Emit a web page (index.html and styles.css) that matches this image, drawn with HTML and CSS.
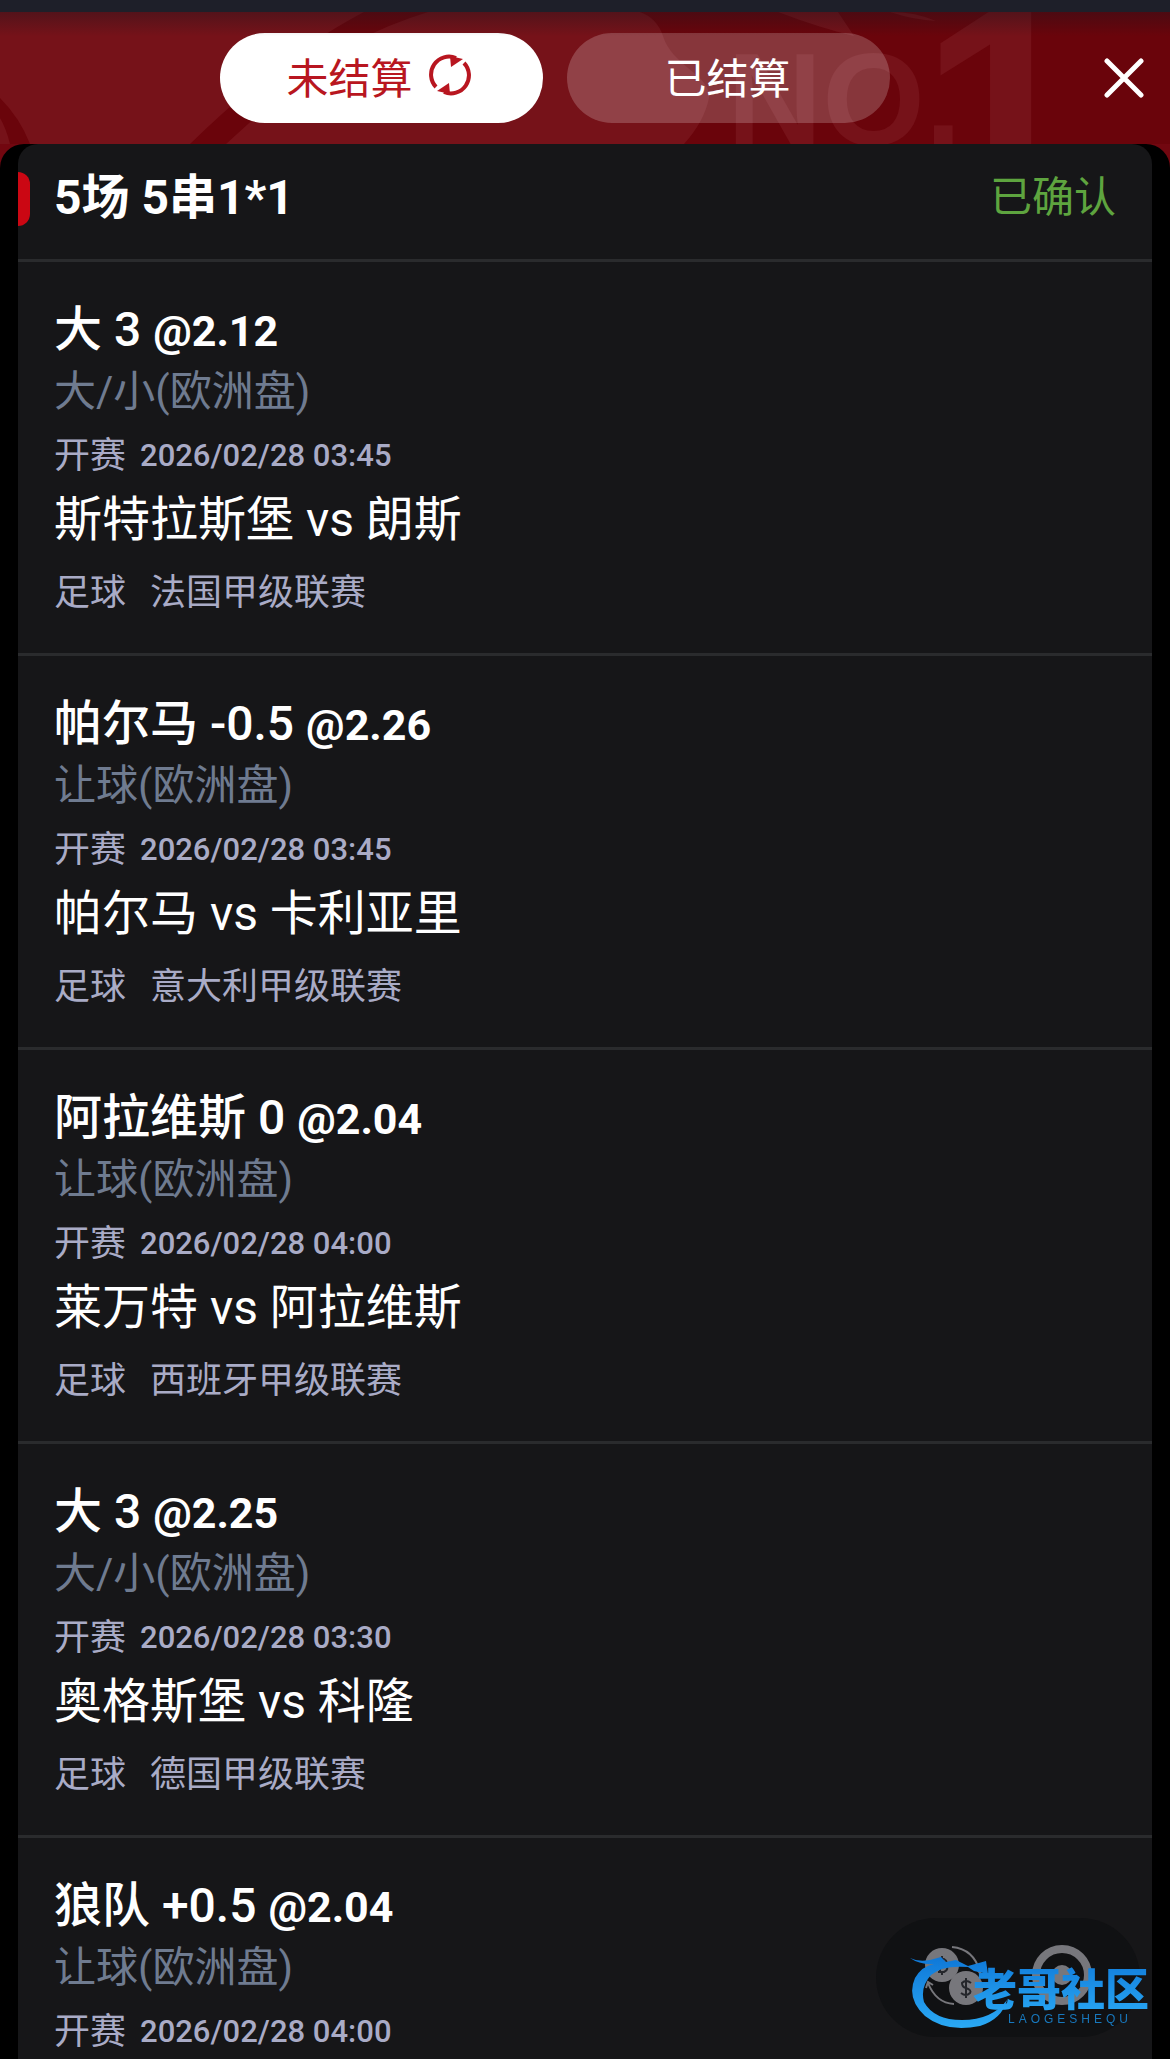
FILE: index.html
```html
<!DOCTYPE html>
<html lang="zh-CN">
<head>
  <meta charset="UTF-8">
  <meta name="viewport" content="width=device-width, initial-scale=1">
  <title>注单</title>
  <link rel="stylesheet" href="styles.css">
</head>
<body>
  <div class="status-strip"></div>

  <header class="header">
    <svg class="header-art" viewBox="0 0 1170 132" preserveAspectRatio="xMidYMin slice" aria-hidden="true">
      <path class="art-light" d="M0 0H640Q657 6 663 24C672 54 712 64 709 86Q704 110 684 132H0Z"/>
      <path class="art-light" d="M778 0H838L854 24Q820 16 778 0ZM890 0Q916 0 936 9Q914 8 890 0Z"/>
      <path class="art-dark" d="M364 0H428Q350 24 292 72L226 132H190Q280 44 364 0ZM0 86Q20 106 30 132H10Q6 116 0 106Z"/>
      <text class="art-text" x="727" y="133" font-size="132">NO.</text>
      <text class="art-text" x="920" y="204" font-size="300">1</text>
    </svg>
    <div class="tabs">
      <button type="button" class="tab active">
        未结算
        <svg class="refresh" viewBox="0 0 42 42" aria-hidden="true">
          <path d="M7 33A18 18 0 0 1 27 4M35 9A18 18 0 0 1 15 38" fill="none" stroke="currentColor" stroke-width="4"/>
          <path d="M21 2L34 5L22 13ZM21 40L8 37L20 29Z" fill="currentColor"/>
        </svg>
      </button>
      <button type="button" class="tab">已结算</button>
    </div>
    <button type="button" class="close" aria-label="关闭">
      <svg viewBox="0 0 40 40"><path d="M3 3L37 37M37 3L3 37"/></svg>
    </button>
  </header>

  <main class="panel">
    <section class="ticket">
      <div class="ticket-head">
        <h1>5场 5串1*1</h1>
        <span class="status">已确认</span>
      </div>

      <article class="bet">
        <h2>大 3 <span class="odds">@2.12</span></h2>
        <p class="market">大/小(欧洲盘)</p>
        <p class="time">开赛 <time>2026/02/28 03:45</time></p>
        <p class="match">斯特拉斯堡 vs 朗斯</p>
        <p class="league"><span>足球</span><span>法国甲级联赛</span></p>
      </article>

      <article class="bet">
        <h2>帕尔马 -0.5 <span class="odds">@2.26</span></h2>
        <p class="market">让球(欧洲盘)</p>
        <p class="time">开赛 <time>2026/02/28 03:45</time></p>
        <p class="match">帕尔马 vs 卡利亚里</p>
        <p class="league"><span>足球</span><span>意大利甲级联赛</span></p>
      </article>

      <article class="bet">
        <h2>阿拉维斯 0 <span class="odds">@2.04</span></h2>
        <p class="market">让球(欧洲盘)</p>
        <p class="time">开赛 <time>2026/02/28 04:00</time></p>
        <p class="match">莱万特 vs 阿拉维斯</p>
        <p class="league"><span>足球</span><span>西班牙甲级联赛</span></p>
      </article>

      <article class="bet">
        <h2>大 3 <span class="odds">@2.25</span></h2>
        <p class="market">大/小(欧洲盘)</p>
        <p class="time">开赛 <time>2026/02/28 03:30</time></p>
        <p class="match">奥格斯堡 vs 科隆</p>
        <p class="league"><span>足球</span><span>德国甲级联赛</span></p>
      </article>

      <article class="bet">
        <h2>狼队 +0.5 <span class="odds">@2.04</span></h2>
        <p class="market">让球(欧洲盘)</p>
        <p class="time">开赛 <time>2026/02/28 04:00</time></p>
      </article>
    </section>
  </main>

  <div class="float-bar">
    <button type="button" aria-label="兑换">
      <svg viewBox="0 0 60 60">
        <circle cx="18" cy="20" r="17"/>
        <circle cx="42" cy="43" r="17"/>
        <path class="line" d="M28 2Q50 4 56 27M50 21L56 28L59 19M4 38Q12 58 30 59M2 43L4 37L9 40"/>
        <path class="mark" d="M14 14H20Q25 17 20 20H15M15 20H21Q26 24 20 27H14M16 14V27M18 11V14M18 27V30"/>
        <path class="mark" d="M47 38Q42 34 38 38Q38 42 42 43Q48 45 46 48Q42 52 37 48M42 33V53"/>
      </svg>
    </button>
    <button type="button" aria-label="主页">
      <svg viewBox="0 0 60 60">
        <circle class="ring" cx="30" cy="30" r="26"/>
        <circle cx="30" cy="30" r="10"/>
      </svg>
    </button>
  </div>

  <div class="watermark">
    <svg viewBox="0 0 242 78" role="img" aria-label="老哥社区 LAOGESHEQU">
      <defs>
        <linearGradient id="wm" x1="0" y1="0" x2="0" y2="1">
          <stop offset="0" stop-color="#0f78d8"/>
          <stop offset="1" stop-color="#2aa9f4"/>
        </linearGradient>
      </defs>
      <path fill="url(#wm)" d="M0 5Q8 9 20 7L31 4L36 9L46 7L58 13L76 8L78 21L64 18L58 14Q32 12 21 22Q10 34 14 49Q24 67 52 67Q82 67 97 47Q92 66 70 73Q36 80 15 63Q-4 45 5 25Q12 13 24 11Q10 12 0 5Z"/>
      <text class="wm-name" x="63" y="53" fill="url(#wm)">老哥社区</text>
      <text class="wm-sub" x="98" y="70" fill="#1878bd">LAOGESHEQU</text>
    </svg>
  </div>
</body>
</html>
```
FILE: styles.css
```css
* {
  box-sizing: border-box;
}
body {
  margin: 0;
  height: 100vh;
  overflow: hidden;
  display: flex;
  flex-direction: column;
  background-color: #720710;
  color: #fff;
  font-family: Roboto, "Noto Sans CJK SC", sans-serif;
}
h1, h2, p {
  margin: 0;
}
button {
  border: none;
  padding: 0;
  background: none;
  color: inherit;
  font-family: inherit;
  cursor: pointer;
}
.status-strip {
  flex: none;
  height: 12px;
  background-color: #1e1f29;
}
.header {
  flex: none;
  position: relative;
  display: flex;
  align-items: center;
  justify-content: flex-end;
  height: 132px;
  padding-right: 26px;
  background-color: #6a040b;
}
.header-art {
  position: absolute;
  inset: 0;
  width: 100%;
  height: 100%;
}
.header::after {
  content: "";
  position: absolute;
  inset: 0 0 auto;
  height: 24px;
  background: linear-gradient(rgba(30, 20, 28, 0.4), rgba(30, 20, 28, 0));
}
.art-light {
  fill: #761219;
}
.art-dark {
  fill: #6a040b;
}
.art-text {
  fill: #761219;
  font-family: "Liberation Sans", Arial, sans-serif;
  font-weight: bold;
}
.tabs {
  position: absolute;
  inset: 0;
  display: flex;
  align-items: center;
  justify-content: center;
  gap: 24px;
  padding-right: 60px;
}
.tab {
  display: flex;
  align-items: center;
  justify-content: center;
  gap: 16px;
  width: 323px;
  height: 90px;
  padding: 0 2px 6px 0;
  border-radius: 45px;
  background-color: rgba(255, 255, 255, 0.2);
  font-size: 42px;
}
.tab.active {
  padding-right: 6px;
  background-color: #fff;
  color: #b81620;
}
.refresh {
  width: 42px;
  height: 42px;
}
.close {
  position: relative;
  width: 40px;
  height: 40px;
}
.close svg {
  display: block;
}
.close path {
  stroke: #fff;
  stroke-width: 5;
  stroke-linecap: round;
}
.panel {
  flex: 1;
  min-height: 0;
  overflow: hidden;
  padding: 0 18px;
  border-radius: 24px 24px 0 0;
  background-color: #000;
}
.ticket {
  border-radius: 20px 20px 0 0;
  background-color: #161618;
}
.ticket-head {
  position: relative;
  display: flex;
  justify-content: space-between;
  padding: 0 36px 7px;
  line-height: 108px;
}
.ticket-head::before {
  content: "";
  position: absolute;
  left: 0;
  top: 28px;
  width: 12px;
  height: 54px;
  border-radius: 0 12px 12px 0;
  background-color: #cb0713;
}
.ticket-head h1 {
  font-size: 48px;
  font-weight: 700;
}
.status {
  color: #5ea43f;
  font-size: 42px;
}
.bet {
  padding: 36px 36px 28px;
  border-top: 3px solid #2a2b2d;
}
.bet h2 {
  font-size: 48px;
  font-weight: 500;
  line-height: 64px;
}
.odds {
  font-size: 43px;
  font-weight: 700;
  line-height: 1;
}
.market {
  color: #6f7b90;
  font-size: 42px;
  line-height: 60px;
}
.time {
  display: flex;
  gap: 14px;
  color: #a9abc6;
  font-size: 36px;
  line-height: 68px;
}
.time time {
  font-size: 31px;
  font-weight: 500;
}
.match {
  font-size: 48px;
  line-height: 60px;
}
.league {
  display: flex;
  gap: 24px;
  margin-top: 11px;
  color: #a9abc6;
  font-size: 36px;
  line-height: 64px;
}
.float-bar {
  position: fixed;
  right: 30px;
  bottom: 22px;
  display: flex;
  gap: 48px;
  padding: 27px 48px 32px;
  border-radius: 60px;
  background-color: #101113;
}
.float-bar svg {
  display: block;
  width: 60px;
  height: 60px;
  fill: #77777c;
}
.float-bar .line {
  fill: none;
  stroke: #77777c;
  stroke-width: 2;
}
.float-bar .ring {
  fill: none;
  stroke: #77777c;
  stroke-width: 8;
}
.float-bar .mark {
  fill: none;
  stroke: #24262b;
  stroke-width: 2;
}
.watermark {
  position: fixed;
  right: 18px;
  bottom: 28px;
  width: 242px;
}
.watermark svg {
  display: block;
}
.wm-name {
  font-family: "Noto Sans CJK SC", sans-serif;
  font-size: 44px;
  font-weight: 900;
}
.wm-sub {
  font-family: "Liberation Sans", sans-serif;
  font-size: 12px;
  letter-spacing: 4px;
}
```
